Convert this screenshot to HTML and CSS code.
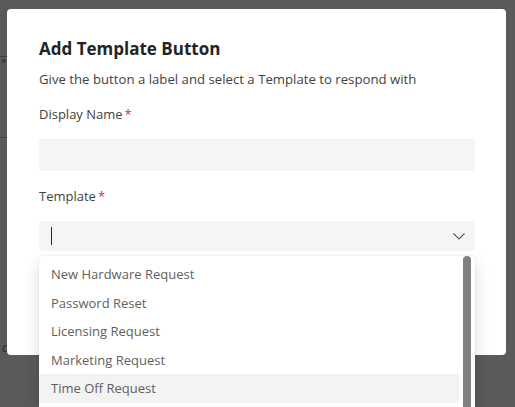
FILE: index.html
```html
<!DOCTYPE html>
<html>
	<head>
		<meta charset="utf-8">
		<title>Add Template Button</title>
		<link rel="stylesheet" href="styles.css">
	</head>
	<body>
		<div class="backdrop">
			<div class="bg-line bg-line-top"><span class="bg-icon">&#x2736;</span></div>
			<div class="bg-line bg-line-mid"></div>
			<span class="bg-text">a</span>
		</div>
		<div class="dialog">
			<h2 class="dialog-title">Add Template Button</h2>
			<p class="dialog-sub">Give the button a label and select a Template to respond with</p>

			<label class="field-label">Display Name<span class="req">*</span></label>
			<div class="field-input"></div>

			<label class="field-label">Template<span class="req">*</span></label>
			<div class="field-input combo">
				<span class="caret"></span>
				<svg class="chevron" width="14" height="14" viewBox="0 0 14 14">
					<path d="M1.5 4.5 L7 10 L12.5 4.5" fill="none" stroke="#5c5c5c" stroke-width="1.1"/>
				</svg>
			</div>
		</div>

		<div class="listbox">
			<div class="option">New Hardware Request</div>
			<div class="option">Password Reset</div>
			<div class="option">Licensing Request</div>
			<div class="option">Marketing Request</div>
			<div class="option active">Time Off Request</div>
			<div class="scrollbar"></div>
		</div>
	</body>
</html>
```

FILE: styles.css
```css
body {
	margin: 0;
	background: #5a5a5a;
	font-family: "Open Sans", "Noto Sans", sans-serif;
	font-size: 13px;
	color: #424242;
	overflow: hidden;
	height: 407px;
}

/*** dimmed page behind the dialog **/

.backdrop {
	position: absolute;
	left: 0;
	top: 0;
	width: 7px;
	height: 407px;
}

.bg-line {
	position: absolute;
	left: 0;
	width: 7px;
	border-top: 1px solid #3e3e3e;
}

.bg-line-top {
	top: 56px;
}

.bg-line-mid {
	top: 137px;
}

.bg-icon {
	position: absolute;
	left: 0;
	top: -3px;
	font-size: 9px;
	color: #333;
}

.bg-text {
	position: absolute;
	left: 2px;
	top: 338px;
	font-style: italic;
	font-size: 13px;
	color: #2a2a2a;
}

/*** dialog **/

.dialog {
	position: relative;
	margin: 9px 0 0 7px;
	width: 499px;
	height: 346px;
	box-sizing: border-box;
	padding: 28px 31px 0 32px;
	background: #fff;
	border-radius: 4px;
}

.dialog-title {
	margin: 0;
	font-size: 17px;
	font-weight: 700;
	line-height: 24px;
	color: #242424;
}

.dialog-sub {
	margin: 8px 0 0 0;
	line-height: 20px;
	font-size: 13.2px;
	color: #424242;
}

.field-label {
	display: block;
	margin-top: 15px;
	line-height: 20px;
	color: #424242;
}

.req {
	color: #c4314b;
	margin-left: 2px;
}

.field-input {
	margin-top: 15px;
	height: 32px;
	background: #f5f5f5;
	border-radius: 3px;
}

.combo {
	position: relative;
	margin-top: 15px;
	height: 30px;
}

.caret {
	position: absolute;
	left: 12px;
	top: 6px;
	width: 1px;
	height: 18px;
	background: #242424;
}

.chevron {
	position: absolute;
	right: 9px;
	top: 8px;
}

/*** dropdown list **/

.listbox {
	position: absolute;
	left: 39px;
	top: 256px;
	width: 436px;
	height: 151px;
	overflow: hidden;
	padding-top: 4px;
	box-sizing: border-box;
	background: #fff;
	box-shadow: 0 8px 16px rgba(0, 0, 0, 0.14), 0 0 2px rgba(0, 0, 0, 0.12);
	border-radius: 4px 4px 0 0;
}

.option {
	height: 28.5px;
	line-height: 28.5px;
	padding-left: 12px;
	margin-right: 16px;
	color: #616161;
}

.option.active {
	background: #f3f3f3;
}

.scrollbar {
	position: absolute;
	right: 4px;
	top: 0;
	width: 8px;
	height: 160px;
	background: #808080;
	border-radius: 4px 4px 0 0;
}
```
